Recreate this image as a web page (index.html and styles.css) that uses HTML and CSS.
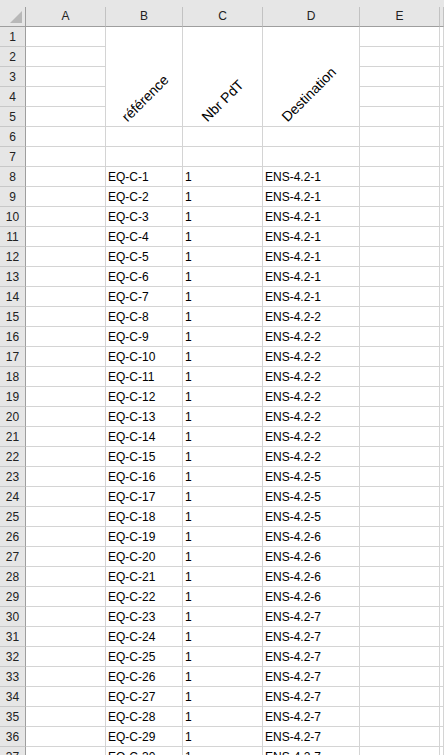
FILE: index.html
```html
<!DOCTYPE html>
<html lang="fr">
<head>
<meta charset="utf-8">
<title>Feuille</title>
<link rel="stylesheet" href="styles.css">
</head>
<body>
<div class="sheet">
  <div class="strip"></div>
  <div class="corner"><svg width="12" height="12" viewBox="0 0 12 12"><polygon points="12,0 12,12 0,12" fill="#b8b8b8"/></svg></div>
  <div class="ch">A</div><div class="ch">B</div><div class="ch">C</div><div class="ch">D</div><div class="ch">E</div><div class="ch"></div>

  <div class="rh">1</div><div class="c"></div>
  <div class="c merged rot-b"><span class="rot">référence</span></div>
  <div class="c merged rot-c"><span class="rot">Nbr PdT</span></div>
  <div class="c merged rot-d"><span class="rot">Destination</span></div>
  <div class="c"></div><div class="c"></div>
  <div class="rh">2</div><div class="c"></div><div class="c"></div><div class="c"></div>
  <div class="rh">3</div><div class="c"></div><div class="c"></div><div class="c"></div>
  <div class="rh">4</div><div class="c"></div><div class="c"></div><div class="c"></div>
  <div class="rh">5</div><div class="c"></div><div class="c"></div><div class="c"></div>
  <div class="rh">6</div><div class="c"></div><div class="c"></div><div class="c"></div><div class="c"></div><div class="c"></div><div class="c"></div>
  <div class="rh">7</div><div class="c"></div><div class="c"></div><div class="c"></div><div class="c"></div><div class="c"></div><div class="c"></div>

  <div class="rh">8</div><div class="c"></div><div class="c">EQ-C-1</div><div class="c">1</div><div class="c">ENS-4.2-1</div><div class="c"></div><div class="c"></div>
  <div class="rh">9</div><div class="c"></div><div class="c">EQ-C-2</div><div class="c">1</div><div class="c">ENS-4.2-1</div><div class="c"></div><div class="c"></div>
  <div class="rh">10</div><div class="c"></div><div class="c">EQ-C-3</div><div class="c">1</div><div class="c">ENS-4.2-1</div><div class="c"></div><div class="c"></div>
  <div class="rh">11</div><div class="c"></div><div class="c">EQ-C-4</div><div class="c">1</div><div class="c">ENS-4.2-1</div><div class="c"></div><div class="c"></div>
  <div class="rh">12</div><div class="c"></div><div class="c">EQ-C-5</div><div class="c">1</div><div class="c">ENS-4.2-1</div><div class="c"></div><div class="c"></div>
  <div class="rh">13</div><div class="c"></div><div class="c">EQ-C-6</div><div class="c">1</div><div class="c">ENS-4.2-1</div><div class="c"></div><div class="c"></div>
  <div class="rh">14</div><div class="c"></div><div class="c">EQ-C-7</div><div class="c">1</div><div class="c">ENS-4.2-1</div><div class="c"></div><div class="c"></div>
  <div class="rh">15</div><div class="c"></div><div class="c">EQ-C-8</div><div class="c">1</div><div class="c">ENS-4.2-2</div><div class="c"></div><div class="c"></div>
  <div class="rh">16</div><div class="c"></div><div class="c">EQ-C-9</div><div class="c">1</div><div class="c">ENS-4.2-2</div><div class="c"></div><div class="c"></div>
  <div class="rh">17</div><div class="c"></div><div class="c">EQ-C-10</div><div class="c">1</div><div class="c">ENS-4.2-2</div><div class="c"></div><div class="c"></div>
  <div class="rh">18</div><div class="c"></div><div class="c">EQ-C-11</div><div class="c">1</div><div class="c">ENS-4.2-2</div><div class="c"></div><div class="c"></div>
  <div class="rh">19</div><div class="c"></div><div class="c">EQ-C-12</div><div class="c">1</div><div class="c">ENS-4.2-2</div><div class="c"></div><div class="c"></div>
  <div class="rh">20</div><div class="c"></div><div class="c">EQ-C-13</div><div class="c">1</div><div class="c">ENS-4.2-2</div><div class="c"></div><div class="c"></div>
  <div class="rh">21</div><div class="c"></div><div class="c">EQ-C-14</div><div class="c">1</div><div class="c">ENS-4.2-2</div><div class="c"></div><div class="c"></div>
  <div class="rh">22</div><div class="c"></div><div class="c">EQ-C-15</div><div class="c">1</div><div class="c">ENS-4.2-2</div><div class="c"></div><div class="c"></div>
  <div class="rh">23</div><div class="c"></div><div class="c">EQ-C-16</div><div class="c">1</div><div class="c">ENS-4.2-5</div><div class="c"></div><div class="c"></div>
  <div class="rh">24</div><div class="c"></div><div class="c">EQ-C-17</div><div class="c">1</div><div class="c">ENS-4.2-5</div><div class="c"></div><div class="c"></div>
  <div class="rh">25</div><div class="c"></div><div class="c">EQ-C-18</div><div class="c">1</div><div class="c">ENS-4.2-5</div><div class="c"></div><div class="c"></div>
  <div class="rh">26</div><div class="c"></div><div class="c">EQ-C-19</div><div class="c">1</div><div class="c">ENS-4.2-6</div><div class="c"></div><div class="c"></div>
  <div class="rh">27</div><div class="c"></div><div class="c">EQ-C-20</div><div class="c">1</div><div class="c">ENS-4.2-6</div><div class="c"></div><div class="c"></div>
  <div class="rh">28</div><div class="c"></div><div class="c">EQ-C-21</div><div class="c">1</div><div class="c">ENS-4.2-6</div><div class="c"></div><div class="c"></div>
  <div class="rh">29</div><div class="c"></div><div class="c">EQ-C-22</div><div class="c">1</div><div class="c">ENS-4.2-6</div><div class="c"></div><div class="c"></div>
  <div class="rh">30</div><div class="c"></div><div class="c">EQ-C-23</div><div class="c">1</div><div class="c">ENS-4.2-7</div><div class="c"></div><div class="c"></div>
  <div class="rh">31</div><div class="c"></div><div class="c">EQ-C-24</div><div class="c">1</div><div class="c">ENS-4.2-7</div><div class="c"></div><div class="c"></div>
  <div class="rh">32</div><div class="c"></div><div class="c">EQ-C-25</div><div class="c">1</div><div class="c">ENS-4.2-7</div><div class="c"></div><div class="c"></div>
  <div class="rh">33</div><div class="c"></div><div class="c">EQ-C-26</div><div class="c">1</div><div class="c">ENS-4.2-7</div><div class="c"></div><div class="c"></div>
  <div class="rh">34</div><div class="c"></div><div class="c">EQ-C-27</div><div class="c">1</div><div class="c">ENS-4.2-7</div><div class="c"></div><div class="c"></div>
  <div class="rh">35</div><div class="c"></div><div class="c">EQ-C-28</div><div class="c">1</div><div class="c">ENS-4.2-7</div><div class="c"></div><div class="c"></div>
  <div class="rh">36</div><div class="c"></div><div class="c">EQ-C-29</div><div class="c">1</div><div class="c">ENS-4.2-7</div><div class="c"></div><div class="c"></div>
  <div class="rh">37</div><div class="c"></div><div class="c">EQ-C-30</div><div class="c">1</div><div class="c">ENS-4.2-7</div><div class="c"></div><div class="c"></div>
</div>
</body>
</html>
```
FILE: styles.css
```css
html, body {
  margin: 0;
  padding: 0;
  height: 755px;
  overflow: hidden;
  background: #ffffff;
}

.sheet {
  display: grid;
  grid-template-columns: 26px 80px 77px 80px 97px 80px 1fr;
  grid-template-rows: 7px 20px;
  grid-auto-rows: 20px;
  font-family: "Liberation Sans", Arial, sans-serif;
  font-size: 12px;
  color: #000;
}

.sheet > div {
  box-sizing: border-box;
}

.strip {
  grid-column: 1 / -1;
  background: #e6e6e6;
}

.corner {
  background: #e6e6e6;
  border-right: 1px solid #9e9e9e;
  border-bottom: 1px solid #9e9e9e;
  display: flex;
  justify-content: flex-end;
  align-items: flex-end;
  padding: 0 3px 3px 0;
}

.corner svg {
  display: block;
}

.ch {
  background: #e6e6e6;
  border-right: 1px solid #c2c2c2;
  border-bottom: 1px solid #9e9e9e;
  color: #222;
  text-align: center;
  line-height: 19px;
}

.rh {
  background: #e6e6e6;
  border-right: 1px solid #9e9e9e;
  border-bottom: 1px solid #c8c8c8;
  color: #222;
  text-align: center;
  line-height: 19px;
  padding-top: 1px;
}

.c {
  background: #fff;
  border-right: 1px solid #d4d4d4;
  border-bottom: 1px solid #d4d4d4;
  line-height: 19px;
  padding: 1px 0 0 2px;
  white-space: nowrap;
  overflow: hidden;
}

.merged {
  grid-row: span 5;
  display: flex;
  align-items: flex-end;
  overflow: visible;
  padding-top: 0;
  padding-bottom: 2px;
}

.rot {
  display: block;
  font-size: 14px;
  line-height: 14px;
  transform: rotate(-45deg);
  transform-origin: 0 100%;
}

.rot-b { padding-left: 23px; }
.rot-c { padding-left: 26px; }
.rot-d { padding-left: 26px; }
```
